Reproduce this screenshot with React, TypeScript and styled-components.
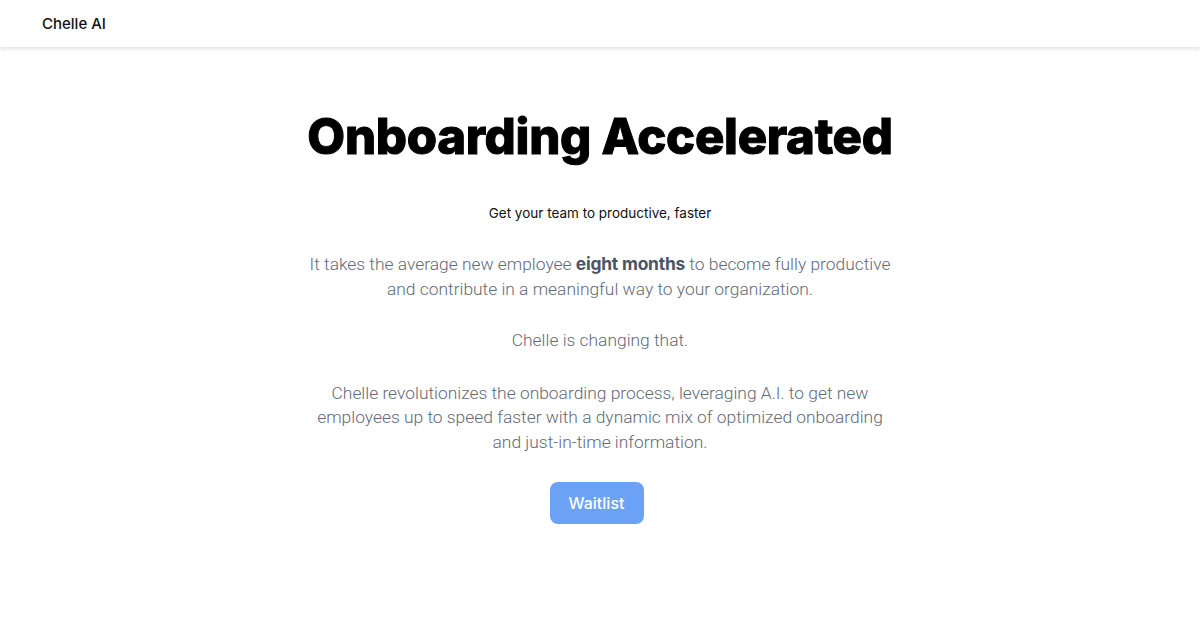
import React from "react";
import styled, { createGlobalStyle } from "styled-components";

const Global = createGlobalStyle`
  html, body { margin: 0; padding: 0; background: #ffffff; }
  body { font-family: Inter, "Noto Sans", sans-serif; -webkit-font-smoothing: antialiased; }
  * { box-sizing: border-box; }
`;

const Header = styled.header`
  height: 47px;
  display: flex;
  align-items: center;
  padding: 0 42px;
  background: #ffffff;
  box-shadow: 0 2px 4px rgba(0, 0, 0, 0.12);
  position: relative;
`;

const Brand = styled.div`
  font-size: 15px;
  font-weight: 500;
  color: #111111;
`;

const Main = styled.main`
  display: flex;
  flex-direction: column;
  align-items: center;
  text-align: center;
  padding-top: 60px;
`;

const Title = styled.h1`
  margin: 0;
  font-size: 49px;
  font-weight: 800;
  line-height: 60px;
  color: #000000;
  -webkit-text-stroke: 1px #000000;
  letter-spacing: -0.3px;
`;

const Tagline = styled.p`
  margin: 36px 0 0;
  font-size: 13.5px;
  line-height: 20px;
  color: #111111;
`;

const Body = styled.p<{ $top: number }>`
  margin: ${(p) => p.$top}px 0 0;
  font-family: Roboto, "Noto Sans", sans-serif;
  font-size: 17.4px;
  line-height: 24.6px;
  color: #626a78;
  font-weight: 300;
  white-space: nowrap;
`;

const Strong = styled.strong`
  font-family: Inter, sans-serif;
  font-weight: 700;
  color: #4b5563;
  letter-spacing: -0.2px;
`;

const Button = styled.button`
  margin: 27px 7px 0 0;
  width: 94px;
  height: 42px;
  border: none;
  border-radius: 8px;
  background: #6ca2f5;
  color: #ffffff;
  font-family: Inter, sans-serif;
  font-size: 16px;
  font-weight: 500;
  cursor: pointer;
`;

export default function App() {
  return (
    <>
      <Global />
      <Header>
        <Brand>Chelle AI</Brand>
      </Header>
      <Main>
        <Title>Onboarding Accelerated</Title>
        <Tagline>Get your team to productive, faster</Tagline>
        <Body $top={29}>
          It takes the average new employee <Strong>eight months</Strong> to become fully productive
          <br />
          and contribute in a meaningful way to your organization.
        </Body>
        <Body $top={26.5}>Chelle is changing that.</Body>
        <Body $top={28.5}>
          Chelle revolutionizes the onboarding process, leveraging A.I. to get new
          <br />
          employees up to speed faster with a dynamic mix of optimized onboarding
          <br />
          and just-in-time information.
        </Body>
        <Button>Waitlist</Button>
      </Main>
    </>
  );
}
